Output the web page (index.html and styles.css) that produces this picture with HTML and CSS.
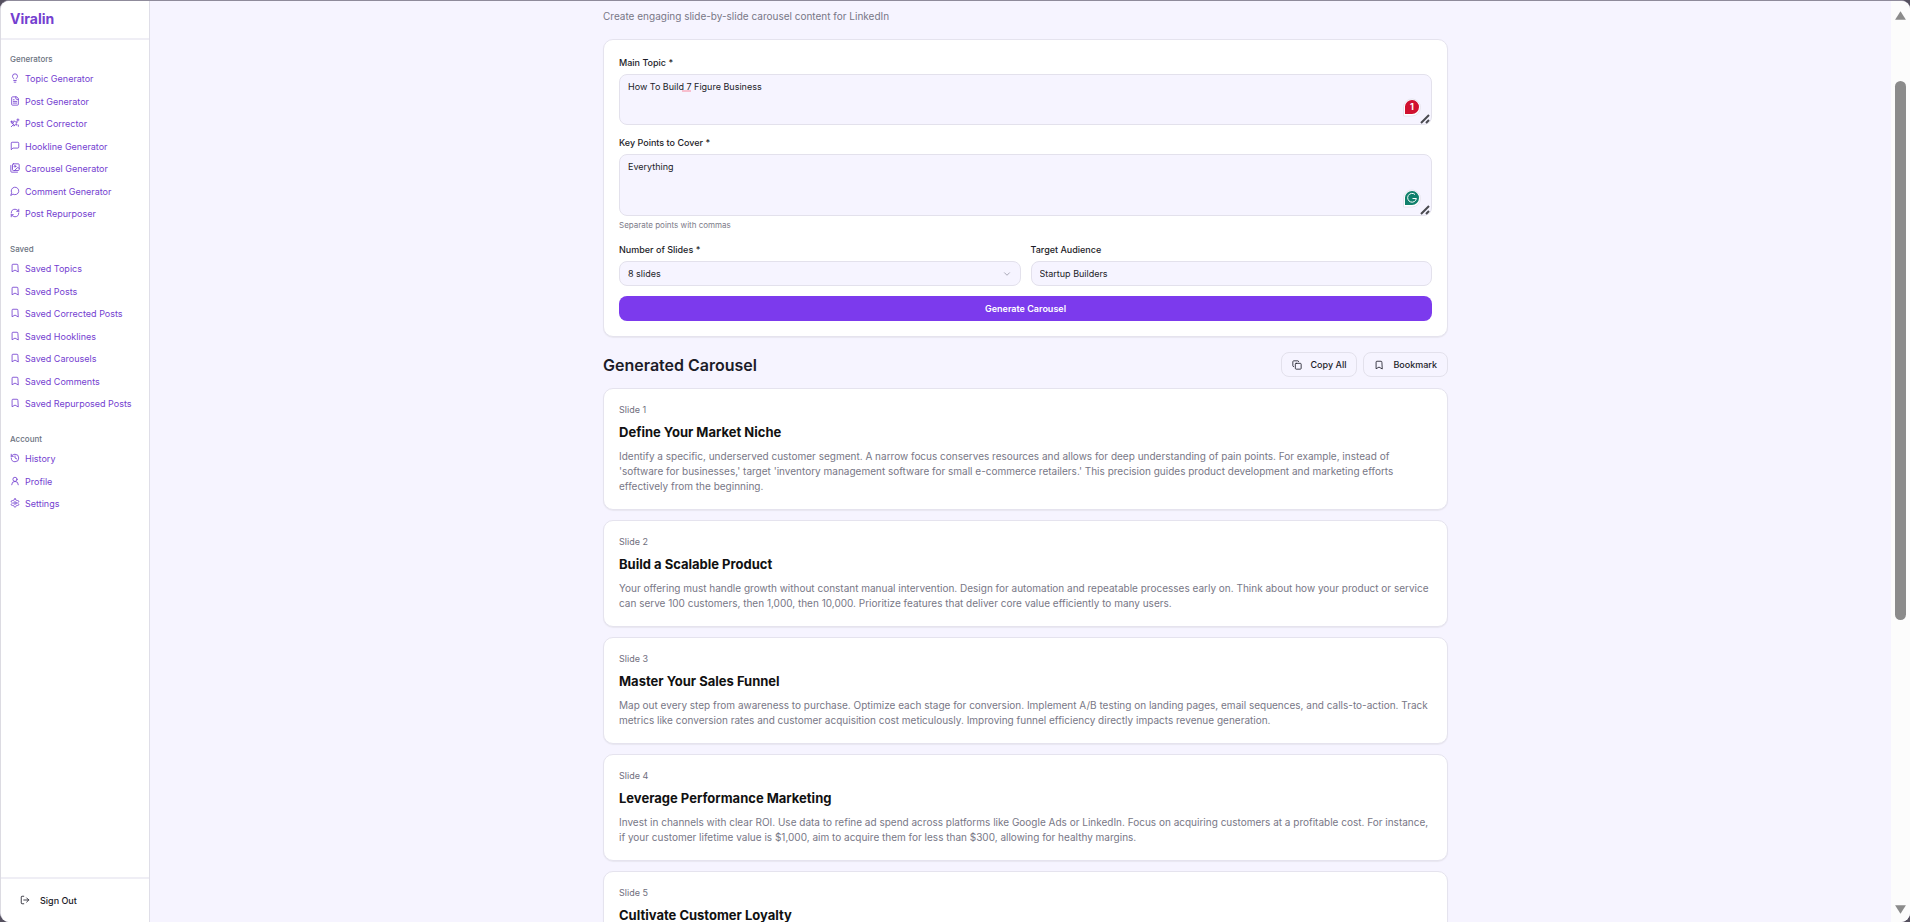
FILE: index.html
```html
<!DOCTYPE html>
<html lang="en">
<head>
    <meta charset="UTF-8">
    <meta name="viewport" content="width=device-width, initial-scale=1.0">
    <title>Viralin - Carousel Generator</title>
    <link rel="stylesheet" href="styles.css">
</head>
<body>
    <!-- icon set -->
    <svg class="sprite" aria-hidden="true">
        <symbol id="i-bulb" viewBox="0 0 24 24"><path d="M15 14c.2-1 .7-1.700 1.500-2.500 1-.9 1.500-2.200 1.500-3.500A6 6 0 0 0 6 8c0 1 .2 2.200 1.500 3.500.7.7 1.300 1.500 1.500 2.500M9 18h6M10 22h4"/></symbol>
        <symbol id="i-file" viewBox="0 0 24 24"><path d="M15 2H6a2 2 0 0 0-2 2v16a2 2 0 0 0 2 2h12a2 2 0 0 0 2-2V7ZM14 2v4a2 2 0 0 0 2 2h4M10 9H8M16 13H8M16 17H8"/></symbol>
        <symbol id="i-sparkles" viewBox="0 0 24 24"><path d="M8.500 10.500 10 6.500l3 3 4.500-.5-2.500 4 2 4-4.500-1-3 3.500-.5-4.500-4-2zM8 16l-5 5M19 2v5M21.500 4.500h-5M4 7v4M6 9H2M20 17v3"/></symbol>
        <symbol id="i-square-msg" viewBox="0 0 24 24"><path d="M21 15a2 2 0 0 1-2 2H7l-4 4V5a2 2 0 0 1 2-2h14a2 2 0 0 1 2 2z"/></symbol>
        <symbol id="i-images" viewBox="0 0 24 24"><path d="M18 22H4a2 2 0 0 1-2-2V6M22 13l-1.300-1.300a2.400 2.400 0 0 0-3.400 0L11 18"/><circle cx="12" cy="8" r="2"/><rect width="16" height="16" x="6" y="2" rx="2"/></symbol>
        <symbol id="i-round-msg" viewBox="0 0 24 24"><path d="M7.900 20A9 9 0 1 0 4 16.100L2 22Z"/></symbol>
        <symbol id="i-refresh" viewBox="0 0 24 24"><path d="M3 12a9 9 0 0 1 9-9 9.750 9.750 0 0 1 6.740 2.740L21 8M21 3v5h-5M21 12a9 9 0 0 1-9 9 9.750 9.750 0 0 1-6.740-2.740L3 16M8 16H3v5"/></symbol>
        <symbol id="i-bookmark" viewBox="0 0 24 24"><path d="m19 21-7-4-7 4V5a2 2 0 0 1 2-2h10a2 2 0 0 1 2 2z"/></symbol>
        <symbol id="i-history" viewBox="0 0 24 24"><path d="M3 12a9 9 0 1 0 9-9 9.750 9.750 0 0 0-6.740 2.740L3 8M3 3v5h5M12 7v5l4 2"/></symbol>
        <symbol id="i-user" viewBox="0 0 24 24"><circle cx="12" cy="8" r="5"/><path d="M20 21a8 8 0 0 0-16 0"/></symbol>
        <symbol id="i-settings" viewBox="0 0 24 24"><path d="M12.220 2h-.440a2 2 0 0 0-2 2v.180a2 2 0 0 1-1 1.730l-.430.250a2 2 0 0 1-2 0l-.150-.080a2 2 0 0 0-2.730.730l-.220.380a2 2 0 0 0 .730 2.730l.150.100a2 2 0 0 1 1 1.720v.510a2 2 0 0 1-1 1.740l-.150.090a2 2 0 0 0-.730 2.730l.220.380a2 2 0 0 0 2.730.730l.150-.080a2 2 0 0 1 2 0l.430.250a2 2 0 0 1 1 1.730V20a2 2 0 0 0 2 2h.440a2 2 0 0 0 2-2v-.180a2 2 0 0 1 1-1.730l.430-.250a2 2 0 0 1 2 0l.150.080a2 2 0 0 0 2.730-.730l.220-.390a2 2 0 0 0-.730-2.730l-.150-.080a2 2 0 0 1-1-1.740v-.500a2 2 0 0 1 1-1.740l.150-.090a2 2 0 0 0 .730-2.730l-.220-.380a2 2 0 0 0-2.730-.730l-.150.080a2 2 0 0 1-2 0l-.430-.250a2 2 0 0 1-1-1.730V4a2 2 0 0 0-2-2z"/><circle cx="12" cy="12" r="3"/></symbol>
        <symbol id="i-logout" viewBox="0 0 24 24"><path d="M9 21H5a2 2 0 0 1-2-2V5a2 2 0 0 1 2-2h4M16 17l5-5-5-5M21 12H9"/></symbol>
        <symbol id="i-copy" viewBox="0 0 24 24"><rect width="14" height="14" x="8" y="8" rx="2"/><path d="M4 16c-1.100 0-2-.9-2-2V4c0-1.100.9-2 2-2h10c1.100 0 2 .9 2 2"/></symbol>
        <symbol id="i-chevron" viewBox="0 0 24 24"><path d="m6 9 6 6 6-6"/></symbol>
        <symbol id="i-grip" viewBox="0 0 10 10"><path d="M1 9l8-8M6 9l3-3"/></symbol>
    </svg>

    <div class="app">
        <aside class="sidebar">
            <div class="brand">Viralin</div>
            <nav class="menu">
                <h3>Generators</h3>
                <ul>
                    <li><a href="#"><svg class="icon"><use href="#i-bulb"/></svg>Topic Generator</a></li>
                    <li><a href="#"><svg class="icon"><use href="#i-file"/></svg>Post Generator</a></li>
                    <li><a href="#"><svg class="icon"><use href="#i-sparkles"/></svg>Post Corrector</a></li>
                    <li><a href="#"><svg class="icon"><use href="#i-square-msg"/></svg>Hookline Generator</a></li>
                    <li><a href="#"><svg class="icon"><use href="#i-images"/></svg>Carousel Generator</a></li>
                    <li><a href="#"><svg class="icon"><use href="#i-round-msg"/></svg>Comment Generator</a></li>
                    <li><a href="#"><svg class="icon"><use href="#i-refresh"/></svg>Post Repurposer</a></li>
                </ul>
                <h3>Saved</h3>
                <ul>
                    <li><a href="#"><svg class="icon"><use href="#i-bookmark"/></svg>Saved Topics</a></li>
                    <li><a href="#"><svg class="icon"><use href="#i-bookmark"/></svg>Saved Posts</a></li>
                    <li><a href="#"><svg class="icon"><use href="#i-bookmark"/></svg>Saved Corrected Posts</a></li>
                    <li><a href="#"><svg class="icon"><use href="#i-bookmark"/></svg>Saved Hooklines</a></li>
                    <li><a href="#"><svg class="icon"><use href="#i-bookmark"/></svg>Saved Carousels</a></li>
                    <li><a href="#"><svg class="icon"><use href="#i-bookmark"/></svg>Saved Comments</a></li>
                    <li><a href="#"><svg class="icon"><use href="#i-bookmark"/></svg>Saved Repurposed Posts</a></li>
                </ul>
                <h3>Account</h3>
                <ul>
                    <li><a href="#"><svg class="icon"><use href="#i-history"/></svg>History</a></li>
                    <li><a href="#"><svg class="icon"><use href="#i-user"/></svg>Profile</a></li>
                    <li><a href="#"><svg class="icon"><use href="#i-settings"/></svg>Settings</a></li>
                </ul>
            </nav>
            <div class="sidebar-footer">
                <button class="sign-out" type="button"><svg class="icon"><use href="#i-logout"/></svg>Sign Out</button>
            </div>
        </aside>

        <main class="main">
            <div class="content">
                <p class="subtitle">Create engaging slide-by-slide carousel content for LinkedIn</p>

                <form class="card form">
                    <div class="field">
                        <label for="topic">Main Topic *</label>
                        <div class="control">
                            <textarea id="topic" class="topic" spellcheck="false">How To Build 7 Figure Business</textarea>
                            <span class="spell-mark"></span>
                            <svg class="checker" viewBox="0 0 18 20"><path class="checker-rim" d="M.5 19V9.500a8.500 8.500 0 1 1 8.500 9.500z"/><path class="checker-red" d="M2 17V9.500a7 7 0 1 1 7 7.500z"/><text x="9" y="13">1</text></svg>
                            <svg class="grip"><use href="#i-grip"/></svg>
                        </div>
                    </div>
                    <div class="field">
                        <label for="points">Key Points to Cover *</label>
                        <div class="control">
                            <textarea id="points" class="points" spellcheck="false">Everything</textarea>
                            <svg class="checker" viewBox="0 0 18 20"><path class="checker-rim" d="M.5 19V9.500a8.500 8.500 0 1 1 8.500 9.500z"/><path class="checker-green" d="M2 17V9.500a7 7 0 1 1 7 7.500z"/><path class="checker-ring" d="M12 6.500A4.400 4.400 0 1 0 13.400 10.500H9.500"/></svg>
                            <svg class="grip"><use href="#i-grip"/></svg>
                        </div>
                        <p class="hint">Separate points with commas</p>
                    </div>
                    <div class="row">
                        <div class="field">
                            <label for="slides">Number of Slides *</label>
                            <div class="control">
                                <select id="slides"><option>8 slides</option></select>
                                <svg class="icon chevron"><use href="#i-chevron"/></svg>
                            </div>
                        </div>
                        <div class="field">
                            <label for="audience">Target Audience</label>
                            <div class="control">
                                <input id="audience" type="text" value="Startup Builders">
                            </div>
                        </div>
                    </div>
                    <button class="generate" type="button">Generate Carousel</button>
                </form>

                <div class="results-head">
                    <h2>Generated Carousel</h2>
                    <div class="actions">
                        <button type="button"><svg class="icon"><use href="#i-copy"/></svg>Copy All</button>
                        <button type="button"><svg class="icon"><use href="#i-bookmark"/></svg>Bookmark</button>
                    </div>
                </div>

                <div class="slides">
                    <article class="card slide">
                        <span class="slide-no">Slide 1</span>
                        <h4>Define Your Market Niche</h4>
                        <p>Identify a specific, underserved customer segment. A narrow focus conserves resources and allows for deep understanding of pain points. For example, instead of 'software for businesses,' target 'inventory management software for small e-commerce retailers.' This precision guides product development and marketing efforts effectively from the beginning.</p>
                    </article>
                    <article class="card slide">
                        <span class="slide-no">Slide 2</span>
                        <h4>Build a Scalable Product</h4>
                        <p>Your offering must handle growth without constant manual intervention. Design for automation and repeatable processes early on. Think about how your product or service can serve 100 customers, then 1,000, then 10,000. Prioritize features that deliver core value efficiently to many users.</p>
                    </article>
                    <article class="card slide">
                        <span class="slide-no">Slide 3</span>
                        <h4>Master Your Sales Funnel</h4>
                        <p>Map out every step from awareness to purchase. Optimize each stage for conversion. Implement A/B testing on landing pages, email sequences, and calls-to-action. Track metrics like conversion rates and customer acquisition cost meticulously. Improving funnel efficiency directly impacts revenue generation.</p>
                    </article>
                    <article class="card slide">
                        <span class="slide-no">Slide 4</span>
                        <h4>Leverage Performance Marketing</h4>
                        <p>Invest in channels with clear ROI. Use data to refine ad spend across platforms like Google Ads or LinkedIn. Focus on acquiring customers at a profitable cost. For instance, if your customer lifetime value is $1,000, aim to acquire them for less than $300, allowing for healthy margins.</p>
                    </article>
                    <article class="card slide">
                        <span class="slide-no">Slide 5</span>
                        <h4>Cultivate Customer Loyalty</h4>
                    </article>
                </div>
            </div>
        </main>

        <div class="scrollbar" aria-hidden="true">
            <svg class="arrow" viewBox="0 0 12 10"><path d="M6 1l5 8H1z"/></svg>
            <div class="track"><div class="thumb"></div></div>
            <svg class="arrow" viewBox="0 0 12 10"><path d="M6 9l5-8H1z"/></svg>
        </div>
    </div>
</body>
</html>
```

FILE: styles.css
```css
* {
    box-sizing: border-box;
}
body {
    margin: 0;
    height: 100vh;
    overflow: hidden;
    background: #55505f;
    color: #1c1c28;
    font-family: Inter, "Liberation Sans", sans-serif;
    font-size: 9px;
    line-height: 15px;
}
h2, h3, h4, p, ul {
    margin: 0;
    padding: 0;
}
button, input, select, textarea {
    font: inherit;
    color: inherit;
}
.sprite {
    display: none;
}
.icon {
    width: 10px;
    height: 10px;
    flex: none;
    fill: none;
    stroke: currentColor;
    stroke-width: 2;
    stroke-linecap: round;
    stroke-linejoin: round;
}
.app {
    display: flex;
    height: 100vh;
    overflow: hidden;
    border-top: 1px solid #8f8b9b;
    border-left: 1px solid #dcdbe2;
    border-radius: 9px;
    background: #f6f4ff;
}

/* sidebar */
.sidebar {
    display: flex;
    flex-direction: column;
    width: 149px;
    flex: none;
    background: #fff;
    border-right: 1px solid #dfdee8;
}
.brand {
    height: 39px;
    padding: 8px 9px;
    border-bottom: 2px solid #efeef5;
    color: #7440d0;
    font-size: 14px;
    line-height: 20px;
    font-weight: 700;
}
.menu {
    flex: 1;
    padding: 12px 9px;
}
.menu h3 {
    color: #6b7280;
    font-size: 8px;
    line-height: 15px;
    font-weight: 500;
}
.menu ul {
    list-style: none;
    margin-bottom: 17px;
}
.menu li {
    height: 23px;
}
.menu li:nth-child(even) {
    height: 22px;
}
.menu a {
    display: flex;
    align-items: center;
    gap: 5px;
    height: 22px;
    color: #7440d0;
    text-decoration: none;
}
.sidebar-footer {
    padding: 11px 9px 12px;
    border-top: 2px solid #efeef5;
}
.sign-out {
    display: flex;
    align-items: center;
    gap: 10px;
    height: 20px;
    padding: 0 10px;
    border: 0;
    background: none;
    font-weight: 500;
}

/* main column */
.main {
    flex: 1;
    padding: 7px 0 0 10px;
}
.content {
    width: 100%;
    max-width: 845px;
    margin: 0 auto;
}
.subtitle {
    color: #787786;
    font-size: 10px;
    line-height: 16px;
}
.card {
    background: #fff;
    border: 1px solid #e5e3ee;
    border-radius: 10px;
    box-shadow: 0 1px 1px #e9e7f1;
}
.form {
    display: flex;
    flex-direction: column;
    gap: 10px;
    margin-top: 15px;
    padding: 15px;
}
.field label {
    display: block;
    margin-bottom: 4px;
    font-weight: 500;
}
.control {
    position: relative;
    display: flex;
}
.control textarea, .control input, .control select {
    width: 100%;
    margin: 0;
    padding: 4px 8px;
    border: 1px solid #e3e1ec;
    border-radius: 8px;
    background: #f6f4ff;
    appearance: none;
    outline: none;
    resize: none;
    overflow: hidden;
}
.control input, .control select {
    height: 25px;
}
.control .topic {
    height: 51px;
}
.control .points {
    height: 62px;
}
.spell-mark {
    position: absolute;
    left: 63px;
    top: 16px;
    width: 9px;
    height: 2px;
    background: #f7bfcf;
}
.checker {
    position: absolute;
    right: 11px;
    bottom: 8px;
    width: 18px;
    height: 20px;
}
.checker text {
    fill: #fff;
    font-size: 9px;
    font-weight: 700;
    text-anchor: middle;
}
.checker-rim {
    fill: #fff;
    stroke: #e6e4ee;
}
.checker-red {
    fill: #d0112f;
}
.checker-green {
    fill: #11806c;
}
.checker-ring {
    fill: none;
    stroke: #fff;
}
.grip {
    position: absolute;
    right: 2px;
    bottom: 1px;
    width: 10px;
    height: 10px;
    fill: none;
    stroke: #4a4a50;
    stroke-width: 2;
}
.chevron {
    position: absolute;
    right: 9px;
    top: 8px;
    color: #9a99a8;
}
.hint {
    margin-top: 3px;
    color: #7c7b89;
    font-size: 8px;
    line-height: 13px;
}
.row {
    display: grid;
    grid-template-columns: 1fr 1fr;
    gap: 10px;
}
.generate {
    height: 25px;
    border: 0;
    border-radius: 8px;
    background: #7c3aed;
    color: #fff;
    font-weight: 600;
}
.results-head {
    display: flex;
    align-items: center;
    justify-content: space-between;
    margin: 15px 0 11px;
}
.results-head h2 {
    font-size: 16px;
    line-height: 24px;
    font-weight: 600;
}
.actions {
    display: flex;
    gap: 6px;
}
.actions button {
    display: flex;
    align-items: center;
    gap: 9px;
    height: 25px;
    padding: 0 10px;
    border: 1px solid #e3e1ec;
    border-radius: 8px;
    background: #f6f4ff;
    font-weight: 500;
}

/* generated slides */
.slides {
    display: flex;
    flex-direction: column;
    gap: 10px;
}
.slide {
    padding: 13px 15px 15px;
}
.slide-no {
    display: block;
    color: #6f6e7d;
    line-height: 15px;
}
.slide h4 {
    margin: 5px 0 7px;
    color: #111;
    font-size: 13px;
    line-height: 20px;
    font-weight: 700;
}
.slide p {
    color: #787786;
    font-size: 10px;
}

/* page scrollbar */
.scrollbar {
    display: flex;
    flex-direction: column;
    align-items: center;
    width: 19px;
    flex: none;
    padding: 9px 0 7px;
    background: #fcfcfc;
}
.arrow {
    width: 13px;
    height: 11px;
    fill: #8b8b8b;
}
.track {
    flex: 1;
    width: 11px;
    padding-top: 60px;
}
.thumb {
    height: calc(66% - 4px);
    border-radius: 6px;
    background: #8b8b8b;
}
```
